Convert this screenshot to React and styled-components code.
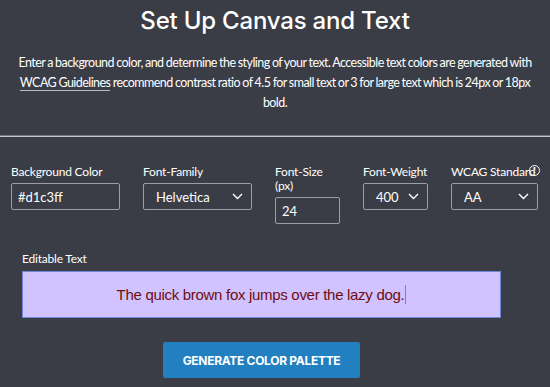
import styled, { createGlobalStyle } from "styled-components";

const GlobalStyle = createGlobalStyle`
  html, body {
    margin: 0;
    padding: 0;
    background: #3a3d45;
  }
  * {
    box-sizing: border-box;
  }
`;

const Page = styled.div`
  width: 550px;
  height: 387px;
  overflow: hidden;
  background: #3a3d45;
  color: #ffffff;
  font-family: 'Lato', 'Open Sans', Arial, sans-serif;
`;

const Header = styled.header`
  padding: 6px 8px 0;
  text-align: center;
`;

const Title = styled.h1`
  margin: 0;
  font-family: 'Inter', 'Noto Sans', sans-serif;
  font-weight: 500;
  font-size: 24px;
  line-height: 30px;
  letter-spacing: -0.2px;
`;

const Intro = styled.p`
  max-width: 526px;
  margin: 17px auto 0;
  font-size: 12.5px;
  line-height: 20px;
  letter-spacing: -0.55px;
  word-spacing: -0.4px;
`;

const GuideLink = styled.a`
  color: #ffffff;
  text-decoration: none;
  border-bottom: 1px solid #b9bcc2;
`;

const Divider = styled.hr`
  margin: 22px 0 0;
  border: none;
  border-top: 1px solid #75787e;
  border-bottom: 1px solid #c4c6ca;
  height: 0;
`;

const FieldRow = styled.div`
  display: flex;
  align-items: flex-start;
  gap: 23px;
  padding: 28px 0 0 11px;
`;

const Field = styled.div`
  position: relative;
  display: flex;
  flex-direction: column;
  width: ${(p) => p.$width}px;
`;

const Label = styled.label`
  font-size: 12px;
  line-height: 14px;
  color: #ffffff;
  margin-bottom: 4px;
  letter-spacing: -0.2px;
`;

const InfoIcon = styled.span`
  position: absolute;
  top: 0;
  right: -2px;
  width: 11px;
  height: 11px;
  border: 1.5px solid #ffffff;
  border-radius: 50%;
  font-size: 8px;
  font-weight: 700;
  line-height: 8px;
  text-align: center;
  color: #ffffff;
`;

const TextInput = styled.input`
  width: 100%;
  height: 27px;
  padding: 0 6px;
  background: transparent;
  border: 1px solid #9b9ea4;
  border-radius: 2px;
  color: #ffffff;
  font-family: 'Lato', Arial, sans-serif;
  font-size: 13px;
  outline: none;
`;

const SelectBox = styled.div`
  display: flex;
  align-items: center;
  justify-content: space-between;
  height: 27px;
  padding: 0 8px 0 12px;
  border: 1px solid #9b9ea4;
  border-radius: 2px;
  font-size: 13px;
  color: #ffffff;
`;

const EditorArea = styled.div`
  padding: 28px 49px 0 22px;
`;

const EditorLabel = styled.div`
  font-size: 12px;
  line-height: 14px;
  margin-bottom: 5px;
  letter-spacing: -0.2px;
`;

const Editable = styled.div`
  height: 47px;
  display: flex;
  align-items: center;
  justify-content: center;
  background: #d1c3ff;
  border: 1px solid #6f86d8;
  font-family: 'Liberation Sans', Arial, sans-serif;
  font-size: 15px;
  letter-spacing: -0.3px;
  color: #6e0d12;
`;

const Caret = styled.span`
  display: inline-block;
  width: 1px;
  height: 19px;
  margin-left: 1px;
  background: #8a7f9a;
  vertical-align: middle;
`;

const Actions = styled.div`
  display: flex;
  justify-content: center;
  padding: 24px 27px 0 0;
`;

const GenerateButton = styled.button`
  width: 197px;
  height: 36px;
  border: none;
  border-radius: 2px;
  background: #2280c0;
  color: #ffffff;
  font-family: 'Inter', 'Noto Sans', sans-serif;
  font-weight: 700;
  font-size: 12px;
  letter-spacing: -0.3px;
  text-transform: uppercase;
  cursor: pointer;
`;

const Chevron = () => (
  <svg width="11" height="7" viewBox="0 0 11 7" fill="none">
    <path d="M1 1l4.5 4.5L10 1" stroke="#ffffff" strokeWidth="1.4" />
  </svg>
);

const selects = {
  family: { label: "Font-Family", value: "Helvetica", width: 109 },
  weight: { label: "Font-Weight", value: "400", width: 65 },
};

const SelectField = ({ label, value, width, children }) => (
  <Field $width={width}>
    <Label>{label}</Label>
    {children}
    <SelectBox>
      {value}
      <Chevron />
    </SelectBox>
  </Field>
);

export default function App() {
  return (
    <Page>
      <GlobalStyle />
      <Header>
        <Title>Set Up Canvas and Text</Title>
        <Intro>
          Enter a background color, and determine the styling of your text. Accessible text colors are generated with{" "}
          <GuideLink href="#">WCAG Guidelines</GuideLink> recommend contrast ratio of 4.5 for small text or 3 for large text which is 24px or 18px bold.
        </Intro>
      </Header>
      <Divider />
      <FieldRow>
        <Field $width={109}>
          <Label>Background Color</Label>
          <TextInput defaultValue="#d1c3ff" />
        </Field>
        <SelectField {...selects.family} />
        <Field $width={65}>
          <Label>Font-Size (px)</Label>
          <TextInput defaultValue="24" />
        </Field>
        <SelectField {...selects.weight} />
        <SelectField label="WCAG Standard" value="AA" width={87}>
          <InfoIcon>!</InfoIcon>
        </SelectField>
      </FieldRow>
      <EditorArea>
        <EditorLabel>Editable Text</EditorLabel>
        <Editable>
          The quick brown fox jumps over the lazy dog.
          <Caret />
        </Editable>
      </EditorArea>
      <Actions>
        <GenerateButton>Generate Color Palette</GenerateButton>
      </Actions>
    </Page>
  );
}
